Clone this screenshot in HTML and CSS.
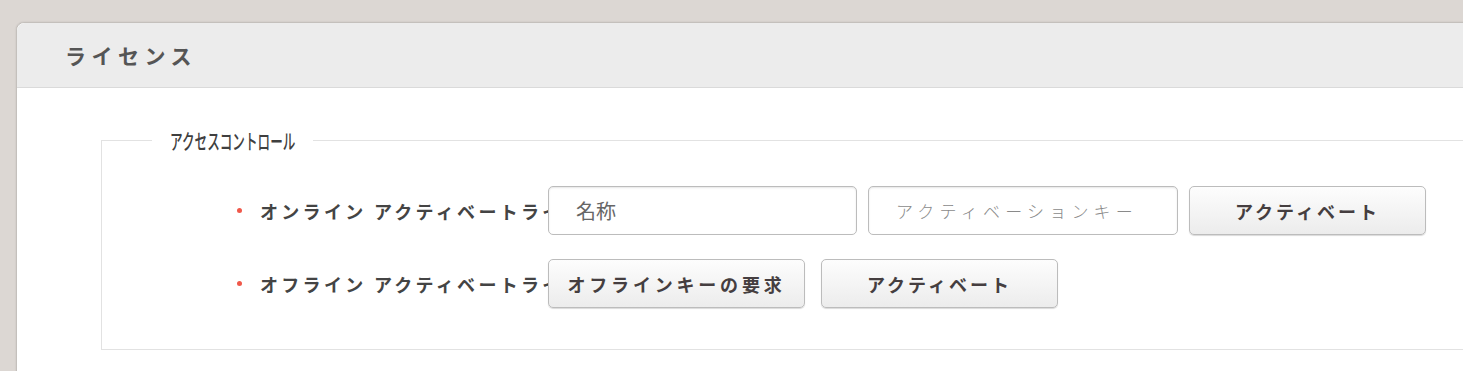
FILE: index.html
```html
<!DOCTYPE html>
<html lang="ja">
<head>
<meta charset="utf-8">
<title>ライセンス</title>
<link rel="stylesheet" href="styles.css">
</head>
<body>
<div class="panel">
<div class="panel-head"><h1 class="panel-title">ライセンス</h1></div>
<div class="panel-body">
<fieldset class="group">
<legend class="group-legend"><span class="narrow">アクセスコントロール</span></legend>
<div class="row">
<span class="req"></span>
<label class="row-label">オンライン アクティベートライセンス</label>
<input class="field field-name" type="text" placeholder="名称">
<input class="field field-key" type="text" placeholder="アクティベーションキー">
<button class="btn btn-online" type="button">アクティベート</button>
</div>
<div class="row">
<span class="req"></span>
<label class="row-label">オフライン アクティベートライセンス</label>
<button class="btn btn-request" type="button">オフラインキーの要求</button>
<button class="btn btn-offline" type="button">アクティベート</button>
</div>
</fieldset>
</div>
</div>
</body>
</html>
```

FILE: styles.css
```css
html,body{margin:0;padding:0;}
body{background-color:#dcd7d3;font-family:"Noto Sans CJK JP","Noto Sans",sans-serif;color:#444;overflow:hidden;width:1463px;height:371px;}
.panel{margin:22px 0 0 16px;width:1600px;background:#fff;border:1px solid #c4c0bc;border-radius:8px 0 0 0;box-shadow:0 0 2px rgba(0,0,0,.12);height:400px;}
.panel-head{height:64px;background:#ececec;border-bottom:1px solid #dadada;border-radius:8px 0 0 0;display:flex;align-items:center;}
.panel-title{margin:0 0 0 48px;font-size:21px;font-weight:bold;letter-spacing:5.5px;color:#555;line-height:1;}
.panel-body{padding:41px 0 0 84px;}
.group{margin:0;padding:0 0 41px 0;border:1px solid #e2e2e2;border-right:none;width:1500px;}
.group-legend{margin-left:50px;padding:0 18px;line-height:20px;}
.narrow{display:inline-block;font-size:21px;font-weight:500;color:#3f3f3f;transform:scaleX(.6);transform-origin:left center;margin-right:-84px;position:relative;top:1px;}
.row{display:flex;align-items:center;padding-left:135px;height:49px;}
.row+.row{margin-top:24px;}
.group .row:first-of-type{margin-top:35px;}
.req{width:5px;height:5px;border-radius:50%;background:#f0584a;margin-right:18px;flex:none;}
.row-label{width:288px;flex:none;overflow:hidden;white-space:nowrap;font-size:18px;font-weight:bold;letter-spacing:3.3px;color:#444;}
.field{box-sizing:border-box;height:49px;border:1px solid #bcbcbc;border-radius:5px;box-shadow:inset 0 1px 2px rgba(0,0,0,.1);font-family:inherit;padding:0 0 0 27px;background:#fff;outline:none;flex:none;}
.field-name{width:309px;font-size:20px;}
.field-name::placeholder{color:#666;}
.field-key{width:310px;margin-left:11px;font-size:17px;letter-spacing:5.2px;}
.field-key::placeholder{color:#8a8a8a;font-weight:300;}
.btn{box-sizing:border-box;height:49px;border:1px solid #bcbcbc;border-radius:5px;background:linear-gradient(#fdfdfd,#ececec);box-shadow:0 1px 1px rgba(0,0,0,.15);font-family:inherit;font-size:18px;font-weight:bold;letter-spacing:3px;color:#453e40;padding:0;flex:none;}
.btn-online{width:237px;margin-left:11px;}
.btn-request{width:257px;letter-spacing:3.8px;}
.btn-offline{width:237px;margin-left:16px;}
```
